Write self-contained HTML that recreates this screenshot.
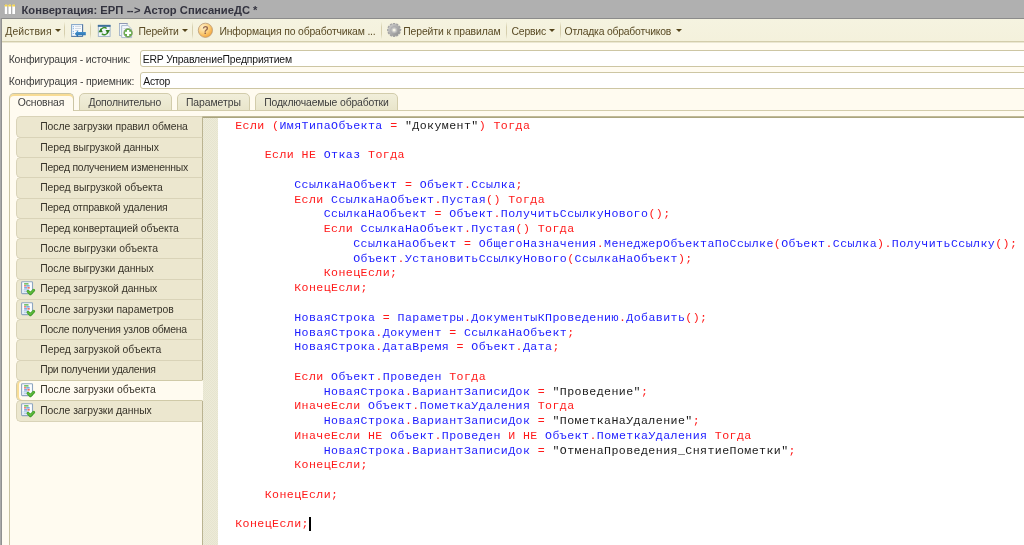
<!DOCTYPE html>
<html><head><meta charset="utf-8">
<style>
*{box-sizing:border-box;margin:0;padding:0}
html,body{width:1024px;height:545px;overflow:hidden;background:#fffbf0;font-family:"Liberation Sans",sans-serif;font-size:10.4px;letter-spacing:-0.14px;color:#3a3a3a}
.abs{position:absolute}
#title{left:0;top:0;width:1024px;height:18px;background:#b0b0b0}
#title .t{position:absolute;left:21.5px;top:2px;transform:translateY(0.8px);line-height:14px;font-weight:bold;font-size:11.2px;letter-spacing:0;color:#33333f;white-space:nowrap}
#lb{left:0;top:18px;width:2px;height:527px;background:#a9a9a9;border-right:1px solid #909090}
#tb{left:2px;top:18px;width:1022px;height:24px;background:linear-gradient(#f5f3e0,#f4f1dc);border-top:1px solid #8b8b8b;border-bottom:1px solid #d3cdac;box-shadow:0 1px 0 #ebe7d2}
.tt{position:absolute;top:25px;line-height:12px;white-space:nowrap;color:#594a24;transform:translateY(0.6px)}
.sep{position:absolute;top:22px;width:1px;height:17px;background:linear-gradient(#f3f1dc,#d6cfae 30%,#d6cfae 70%,#f3f1dc)}
.arr{position:absolute;top:28.7px;width:0;height:0;margin-left:-0.4px;border-left:3px solid transparent;border-right:3px solid transparent;border-top:3.1px solid #54441a}
.lbl{position:absolute;line-height:12px;white-space:nowrap;color:#3b3b3b;transform:translateY(0.6px)}
.inp{position:absolute;left:140px;width:900px;height:17px;background:#fff;border:1px solid #cdc6a3;border-radius:3px;color:#151515;padding:2px 0 0 3px;line-height:12px;white-space:nowrap}
.tab{position:absolute;top:93px;height:18px;background:linear-gradient(#f1eeda,#e9e5cb);border:1px solid #d2ccab;border-bottom:1px solid #d2ccab;border-radius:5px 5px 0 0;text-align:center;color:#3d3d3d;line-height:12px;padding-top:2px;white-space:nowrap}
.tab.act{background:#fffbf0;border-color:#cbc5a4;border-bottom:none;box-shadow:inset 0 2px 0 #f8dc95;z-index:3}
#panel{left:9px;top:110px;width:1030px;height:450px;border:1px solid #d2ccab;border-left-color:#c9c3a2;background:#fffbf0}
.btn{position:absolute;left:16px;width:187px;background:#ece7cf;border:1px solid #d9d3b8;border-right:1px solid #bab391;border-radius:5px 0 0 5px}
.bt{position:absolute;left:41px;top:0;line-height:12px;color:#38342a;white-space:nowrap;z-index:4}
.btn.act{background:#fffbf0;border-color:#d0caa8;border-right-color:#fffbf0;box-shadow:inset 2px 0 0 #f9dd96;z-index:2}
.ci{position:absolute;left:21px;width:15px;height:15px;z-index:4}
#cbox{left:202px;top:116px;width:830px;height:440px;background:#fff;border-top:1px solid #bfb997;border-left:1px solid #b9b391;box-shadow:inset 0 1px 0 #aaa47e}
#hatch{left:203px;top:118px;width:14.6px;height:440px;background:repeating-conic-gradient(#e6e4cf 0 25%,#edebd8 0 50%) 0 0/2px 2px}
pre{position:absolute;left:235.2px;top:118.8px;font-family:"Liberation Mono",monospace;font-size:11.6px;letter-spacing:0.42px;line-height:14.76px;color:#1c1cff;white-space:pre}
pre b{font-weight:normal;color:#ff1a1a}
pre i{font-style:normal;color:#1a1a1a}
.inp span{display:inline-block;transform:translateY(0.6px)}
.tabt{position:absolute;top:96px;line-height:12px;white-space:nowrap;color:#3d3d3d;z-index:5;transform:translateY(0.8px)}
.tt,.lbl,.bt,.tabt,pre,#title .t{filter:blur(0.35px)}
svg{filter:blur(0.3px)}
</style></head><body>
<div id="title" class="abs">
<svg class="abs" style="left:4px;top:4px" width="12" height="11" viewBox="0 0 12 11">
<g stroke="#999" stroke-width="0.5" fill="#fff"><rect x="0.4" y="0.4" width="3.3" height="9.9"/><rect x="4.1" y="0.4" width="3.3" height="9.9"/><rect x="8" y="0.4" width="3.3" height="9.9"/></g>
<g fill="#f8d648"><rect x="0.7" y="0.6" width="2.7" height="1.9"/><rect x="4.4" y="0.6" width="2.7" height="1.9"/><rect x="8.3" y="0.6" width="2.7" height="1.9"/></g>
</svg>
<div class="t">Конвертация: ЕРП <span style="letter-spacing:-0.8px;margin-left:0.4px">-</span><span style="margin-right:0.4px">-</span>&gt; Астор СписаниеДС *</div></div>
<div id="tb" class="abs"></div>
<div id="lb" class="abs"></div>
<div class="tt" style="left:5.3px;letter-spacing:0.109px">Действия</div><div class="arr" style="left:55px"></div>
<div class="sep" style="left:64px"></div>
<svg class="abs" style="left:70px;top:23px" width="17" height="16" viewBox="0 0 17 16">
<defs><linearGradient id="ag" x1="0" y1="0" x2="0" y2="1"><stop offset="0" stop-color="#4f9cd6"/><stop offset="1" stop-color="#2068a8"/></linearGradient></defs>
<rect x="1.6" y="1.6" width="11" height="11.8" fill="#f7fafd" stroke="#7fa3c8" stroke-width="1"/>
<path d="M12.6 1.4 V13.4 H1.4" fill="none" stroke="#55779f" stroke-width="1"/>
<g fill="#c9d2de"><rect x="5" y="3.2" width="6" height="0.8"/><rect x="5" y="5.2" width="6" height="0.8"/><rect x="5" y="7.2" width="3.5" height="0.8"/></g>
<g fill="#7fb0e0"><rect x="2.8" y="3.1" width="1.1" height="1.1"/><rect x="2.8" y="5.1" width="1.1" height="1.1"/><rect x="2.8" y="7.9" width="1.1" height="1.1"/><rect x="2.8" y="9.9" width="1.1" height="1.1"/></g>
<path d="M4.7 10.7 L8.1 7.2 V9.1 H15.8 V12.2 H8.1 V14.2 Z" fill="url(#ag)"/>
</svg>
<div class="sep" style="left:90px"></div>
<svg class="abs" style="left:97px;top:24px" width="14" height="14" viewBox="0 0 14 14">
<rect x="1.3" y="1.4" width="11.8" height="11" fill="#f1f6fb" stroke="#9ab0c6" stroke-width="0.9"/>
<rect x="0.85" y="0.85" width="12.7" height="2" fill="#3d6f9b"/>
<path d="M3.7 6.6 A3.5 3.5 0 0 1 9.6 4.6" fill="none" stroke="#3d8f2c" stroke-width="1.4"/>
<path d="M10.7 7.8 A3.5 3.5 0 0 1 4.8 9.8" fill="none" stroke="#3d8f2c" stroke-width="1.4"/>
<path d="M1.5 8.3 L5.9 8.3 L3.7 4.3 Z" fill="#2f7d20"/>
<path d="M8.5 6.1 L12.9 6.1 L10.7 10.1 Z" fill="#2f7d20"/>
</svg>
<svg class="abs" style="left:118px;top:22px" width="16" height="17" viewBox="0 0 16 17">
<rect x="1.5" y="1.5" width="7.6" height="12" fill="#f3f6fa" stroke="#a9b8cc"/>
<rect x="1" y="1" width="8.6" height="1" fill="#8f98b4"/>
<path d="M3.7 3.6 H10 L13.6 7 V15.6 H3.7 Z" fill="#f8fafd" stroke="#a9b9cd"/>
<g fill="#ccd5e1"><rect x="5.5" y="6" width="4" height="0.9"/><rect x="5.5" y="8" width="3" height="0.9"/></g>
<circle cx="10.1" cy="10.9" r="4.3" fill="#5dad43" stroke="#8fa274" stroke-width="0.9"/>
<path d="M10.1 7.9 V13.9 M7.1 10.9 H13.1" stroke="#fff" stroke-width="2.3"/>
</svg>
<div class="tt" style="left:138.4px;letter-spacing:-0.117px">Перейти</div><div class="arr" style="left:182px"></div>
<div class="sep" style="left:192px"></div>
<svg class="abs" style="left:197px;top:22px" width="17" height="17" viewBox="0 0 17 17">
<defs><radialGradient id="hg" cx="0.35" cy="0.3" r="0.8"><stop offset="0" stop-color="#fff0cc"/><stop offset="0.5" stop-color="#fbcf7e"/><stop offset="1" stop-color="#f39c2a"/></radialGradient></defs>
<circle cx="8.4" cy="8.3" r="7.1" fill="url(#hg)" stroke="#b99a78" stroke-width="0.8"/>
<text x="8.4" y="12" text-anchor="middle" font-family="Liberation Sans" font-weight="bold" font-size="10.5" fill="#946850" letter-spacing="0">?</text>
</svg>
<div class="tt" style="left:219.4px;letter-spacing:-0.154px">Информация по обработчикам ...</div>
<div class="sep" style="left:381px"></div>
<svg class="abs" style="left:386px;top:22px" width="16" height="16" viewBox="0 0 16 16">
<defs><linearGradient id="gg" x1="0" y1="0" x2="1" y2="1"><stop offset="0" stop-color="#cfcfcf"/><stop offset="1" stop-color="#8c8c8c"/></linearGradient></defs>
<g transform="translate(8.1,8)">
<g fill="#a2a2a2"><rect x="-1.35" y="-7" width="2.7" height="2.4" rx="0.7" transform="rotate(0)"/><rect x="-1.35" y="-7" width="2.7" height="2.4" rx="0.7" transform="rotate(30)"/><rect x="-1.35" y="-7" width="2.7" height="2.4" rx="0.7" transform="rotate(60)"/><rect x="-1.35" y="-7" width="2.7" height="2.4" rx="0.7" transform="rotate(90)"/><rect x="-1.35" y="-7" width="2.7" height="2.4" rx="0.7" transform="rotate(120)"/><rect x="-1.35" y="-7" width="2.7" height="2.4" rx="0.7" transform="rotate(150)"/><rect x="-1.35" y="-7" width="2.7" height="2.4" rx="0.7" transform="rotate(180)"/><rect x="-1.35" y="-7" width="2.7" height="2.4" rx="0.7" transform="rotate(210)"/><rect x="-1.35" y="-7" width="2.7" height="2.4" rx="0.7" transform="rotate(240)"/><rect x="-1.35" y="-7" width="2.7" height="2.4" rx="0.7" transform="rotate(270)"/><rect x="-1.35" y="-7" width="2.7" height="2.4" rx="0.7" transform="rotate(300)"/><rect x="-1.35" y="-7" width="2.7" height="2.4" rx="0.7" transform="rotate(330)"/></g>
<circle r="5.9" fill="url(#gg)"/>
<circle r="3.3" fill="#c3c3c3" stroke="#9d9d9d" stroke-width="0.5"/>
<circle r="1.6" fill="#f6f4e6"/>
</g>
</svg>
<div class="tt" style="left:403.2px;letter-spacing:-0.096px">Перейти к правилам</div>
<div class="sep" style="left:506px"></div>
<div class="tt" style="left:511.5px;letter-spacing:-0.183px">Сервис</div><div class="arr" style="left:549px"></div>
<div class="sep" style="left:560px"></div>
<div class="tt" style="left:564.6px;letter-spacing:-0.208px">Отладка обработчиков</div><div class="arr" style="left:676px"></div>

<div class="lbl" style="left:8.7px;top:53px;letter-spacing:-0.12px">Конфигурация - источник:</div>
<div class="inp" style="top:50px"></div><div class="lbl" style="left:142.7px;top:53px;letter-spacing:-0.143px;color:#151515">ERP УправлениеПредприятием</div>
<div class="lbl" style="left:8.7px;top:75px;letter-spacing:-0.104px">Конфигурация - приемник:</div>
<div class="inp" style="top:72px"></div><div class="lbl" style="left:143.3px;top:75px;letter-spacing:-0.317px;color:#151515">Астор</div>

<div id="panel" class="abs"></div>
<div class="tab act" style="left:9px;width:65px"></div><div class="tabt" style="left:17.8px;letter-spacing:-0.124px">Основная</div>
<div class="tab" style="left:79px;width:93px"></div><div class="tabt" style="left:88.5px;letter-spacing:-0.172px">Дополнительно</div>
<div class="tab" style="left:177px;width:73px"></div><div class="tabt" style="left:185.9px;letter-spacing:-0.045px">Параметры</div>
<div class="tab" style="left:255px;width:143px"></div><div class="tabt" style="left:264.2px;letter-spacing:-0.139px">Подключаемые обработки</div>

<div id="cbox" class="abs"></div>
<div id="hatch" class="abs"></div>

<!--BTNS-->
<div class="btn" style="top:116px;height:22px"></div>
<div class="btn" style="top:137px;height:21px"></div>
<div class="btn" style="top:157px;height:21px"></div>
<div class="btn" style="top:177px;height:22px"></div>
<div class="btn" style="top:198px;height:21px"></div>
<div class="btn" style="top:218px;height:21px"></div>
<div class="btn" style="top:238px;height:21px"></div>
<div class="btn" style="top:258px;height:22px"></div>
<div class="btn" style="top:279px;height:21px"></div>
<div class="btn" style="top:299px;height:21px"></div>
<div class="btn" style="top:319px;height:21px"></div>
<div class="btn" style="top:339px;height:22px"></div>
<div class="btn" style="top:360px;height:21px"></div>
<div class="btn act" style="top:380px;height:21px"></div>
<div class="btn" style="top:400px;height:22px"></div>
<div class="bt" style="left:40.2px;letter-spacing:-0.078px;transform:translateY(121.45px)">После загрузки правил обмена</div>
<div class="bt" style="left:40.2px;letter-spacing:-0.112px;transform:translateY(141.68px)">Перед выгрузкой данных</div>
<div class="bt" style="left:40.2px;letter-spacing:-0.215px;transform:translateY(161.91px)">Перед получением измененных</div>
<div class="bt" style="left:40.2px;letter-spacing:-0.051px;transform:translateY(182.14px)">Перед выгрузкой объекта</div>
<div class="bt" style="left:40.2px;letter-spacing:-0.168px;transform:translateY(202.37px)">Перед отправкой удаления</div>
<div class="bt" style="left:40.2px;letter-spacing:-0.131px;transform:translateY(222.60px)">Перед конвертацией объекта</div>
<div class="bt" style="left:40.2px;letter-spacing:0.011px;transform:translateY(242.83px)">После выгрузки объекта</div>
<div class="bt" style="left:40.2px;letter-spacing:-0.07px;transform:translateY(263.06px)">После выгрузки данных</div>
<div class="bt" style="left:40.2px;letter-spacing:-0.071px;transform:translateY(283.29px)">Перед загрузкой данных</div>
<svg class="ci" style="top:281.39px" viewBox="0 0 15 15"><rect x="0.6" y="0.8" width="10.9" height="11.8" rx="0.8" fill="#fbfdff" stroke="#8fa6c0" stroke-width="1.1"/><rect x="1.2" y="8" width="5" height="4" fill="#dce8f5" opacity="0.8"/><rect x="3" y="2.3" width="4.6" height="1.1" rx="0.5" fill="#4fae3a"/><rect x="3" y="4.3" width="2" height="1.1" rx="0.4" fill="#e8483a"/><rect x="5" y="4.3" width="3.8" height="1.1" rx="0.4" fill="#5a8fd0"/><rect x="3" y="6.3" width="3.3" height="1.1" rx="0.4" fill="#5a8fd0"/><rect x="6.3" y="6.3" width="2.6" height="1.1" rx="0.4" fill="#e8483a"/><rect x="3" y="8.3" width="5" height="0.9" fill="#a9c4e6"/><rect x="3" y="10" width="3" height="0.9" fill="#b9cfea"/><path d="M7 10.3 L9.4 12.7 L12.7 9.2" fill="none" stroke="#3f9a27" stroke-width="2.9" stroke-linecap="round" stroke-linejoin="round"/><path d="M7 10.2 L9.4 12.5 L12.7 9.1" fill="none" stroke="#5dbb3c" stroke-width="1.5" stroke-linecap="round" stroke-linejoin="round"/></svg>
<div class="bt" style="left:40.2px;letter-spacing:-0.006px;transform:translateY(303.52px)">После загрузки параметров</div>
<svg class="ci" style="top:301.62px" viewBox="0 0 15 15"><rect x="0.6" y="0.8" width="10.9" height="11.8" rx="0.8" fill="#fbfdff" stroke="#8fa6c0" stroke-width="1.1"/><rect x="1.2" y="8" width="5" height="4" fill="#dce8f5" opacity="0.8"/><rect x="3" y="2.3" width="4.6" height="1.1" rx="0.5" fill="#4fae3a"/><rect x="3" y="4.3" width="2" height="1.1" rx="0.4" fill="#e8483a"/><rect x="5" y="4.3" width="3.8" height="1.1" rx="0.4" fill="#5a8fd0"/><rect x="3" y="6.3" width="3.3" height="1.1" rx="0.4" fill="#5a8fd0"/><rect x="6.3" y="6.3" width="2.6" height="1.1" rx="0.4" fill="#e8483a"/><rect x="3" y="8.3" width="5" height="0.9" fill="#a9c4e6"/><rect x="3" y="10" width="3" height="0.9" fill="#b9cfea"/><path d="M7 10.3 L9.4 12.7 L12.7 9.2" fill="none" stroke="#3f9a27" stroke-width="2.9" stroke-linecap="round" stroke-linejoin="round"/><path d="M7 10.2 L9.4 12.5 L12.7 9.1" fill="none" stroke="#5dbb3c" stroke-width="1.5" stroke-linecap="round" stroke-linejoin="round"/></svg>
<div class="bt" style="left:40.2px;letter-spacing:-0.228px;transform:translateY(323.75px)">После получения узлов обмена</div>
<div class="bt" style="left:40.2px;letter-spacing:-0.013px;transform:translateY(343.98px)">Перед загрузкой объекта</div>
<div class="bt" style="left:40.2px;letter-spacing:-0.28px;transform:translateY(364.21px)">При получении удаления</div>
<div class="bt" style="left:40.2px;letter-spacing:0.023px;transform:translateY(384.44px)">После загрузки объекта</div>
<svg class="ci" style="top:382.54px" viewBox="0 0 15 15"><rect x="0.6" y="0.8" width="10.9" height="11.8" rx="0.8" fill="#fbfdff" stroke="#8fa6c0" stroke-width="1.1"/><rect x="1.2" y="8" width="5" height="4" fill="#dce8f5" opacity="0.8"/><rect x="3" y="2.3" width="4.6" height="1.1" rx="0.5" fill="#4fae3a"/><rect x="3" y="4.3" width="2" height="1.1" rx="0.4" fill="#e8483a"/><rect x="5" y="4.3" width="3.8" height="1.1" rx="0.4" fill="#5a8fd0"/><rect x="3" y="6.3" width="3.3" height="1.1" rx="0.4" fill="#5a8fd0"/><rect x="6.3" y="6.3" width="2.6" height="1.1" rx="0.4" fill="#e8483a"/><rect x="3" y="8.3" width="5" height="0.9" fill="#a9c4e6"/><rect x="3" y="10" width="3" height="0.9" fill="#b9cfea"/><path d="M7 10.3 L9.4 12.7 L12.7 9.2" fill="none" stroke="#3f9a27" stroke-width="2.9" stroke-linecap="round" stroke-linejoin="round"/><path d="M7 10.2 L9.4 12.5 L12.7 9.1" fill="none" stroke="#5dbb3c" stroke-width="1.5" stroke-linecap="round" stroke-linejoin="round"/></svg>
<div class="bt" style="left:40.2px;letter-spacing:-0.037px;transform:translateY(404.67px)">После загрузки данных</div>
<svg class="ci" style="top:402.77px" viewBox="0 0 15 15"><rect x="0.6" y="0.8" width="10.9" height="11.8" rx="0.8" fill="#fbfdff" stroke="#8fa6c0" stroke-width="1.1"/><rect x="1.2" y="8" width="5" height="4" fill="#dce8f5" opacity="0.8"/><rect x="3" y="2.3" width="4.6" height="1.1" rx="0.5" fill="#4fae3a"/><rect x="3" y="4.3" width="2" height="1.1" rx="0.4" fill="#e8483a"/><rect x="5" y="4.3" width="3.8" height="1.1" rx="0.4" fill="#5a8fd0"/><rect x="3" y="6.3" width="3.3" height="1.1" rx="0.4" fill="#5a8fd0"/><rect x="6.3" y="6.3" width="2.6" height="1.1" rx="0.4" fill="#e8483a"/><rect x="3" y="8.3" width="5" height="0.9" fill="#a9c4e6"/><rect x="3" y="10" width="3" height="0.9" fill="#b9cfea"/><path d="M7 10.3 L9.4 12.7 L12.7 9.2" fill="none" stroke="#3f9a27" stroke-width="2.9" stroke-linecap="round" stroke-linejoin="round"/><path d="M7 10.2 L9.4 12.5 L12.7 9.1" fill="none" stroke="#5dbb3c" stroke-width="1.5" stroke-linecap="round" stroke-linejoin="round"/></svg>
<!--/BTNS-->

<pre><b>Если (</b>ИмяТипаОбъекта <b>=</b> <i>"Документ"</i><b>) Тогда</b>

    <b>Если НЕ</b> Отказ <b>Тогда</b>

        СсылкаНаОбъект <b>=</b> Объект<b>.</b>Ссылка<b>;</b>
        <b>Если</b> СсылкаНаОбъект<b>.</b>Пустая<b>() Тогда</b>
            СсылкаНаОбъект <b>=</b> Объект<b>.</b>ПолучитьСсылкуНового<b>();</b>
            <b>Если</b> СсылкаНаОбъект<b>.</b>Пустая<b>() Тогда</b>
                СсылкаНаОбъект <b>=</b> ОбщегоНазначения<b>.</b>МенеджерОбъектаПоСсылке<b>(</b>Объект<b>.</b>Ссылка<b>).</b>ПолучитьСсылку<b>();</b>
                Объект<b>.</b>УстановитьСсылкуНового<b>(</b>СсылкаНаОбъект<b>);</b>
            <b>КонецЕсли;</b>
        <b>КонецЕсли;</b>

        НоваяСтрока <b>=</b> Параметры<b>.</b>ДокументыКПроведению<b>.</b>Добавить<b>();</b>
        НоваяСтрока<b>.</b>Документ <b>=</b> СсылкаНаОбъект<b>;</b>
        НоваяСтрока<b>.</b>ДатаВремя <b>=</b> Объект<b>.</b>Дата<b>;</b>

        <b>Если</b> Объект<b>.</b>Проведен <b>Тогда</b>
            НоваяСтрока<b>.</b>ВариантЗаписиДок <b>=</b> <i>"Проведение"</i><b>;</b>
        <b>ИначеЕсли</b> Объект<b>.</b>ПометкаУдаления <b>Тогда</b>
            НоваяСтрока<b>.</b>ВариантЗаписиДок <b>=</b> <i>"ПометкаНаУдаление"</i><b>;</b>
        <b>ИначеЕсли НЕ</b> Объект<b>.</b>Проведен <b>И НЕ</b> Объект<b>.</b>ПометкаУдаления <b>Тогда</b>
            НоваяСтрока<b>.</b>ВариантЗаписиДок <b>=</b> <i>"ОтменаПроведения_СнятиеПометки"</i><b>;</b>
        <b>КонецЕсли;</b>

    <b>КонецЕсли;</b>

<b>КонецЕсли;</b></pre>
<div class="abs" style="left:309px;top:516.5px;width:1.6px;height:14px;background:#000"></div>
</body></html>
